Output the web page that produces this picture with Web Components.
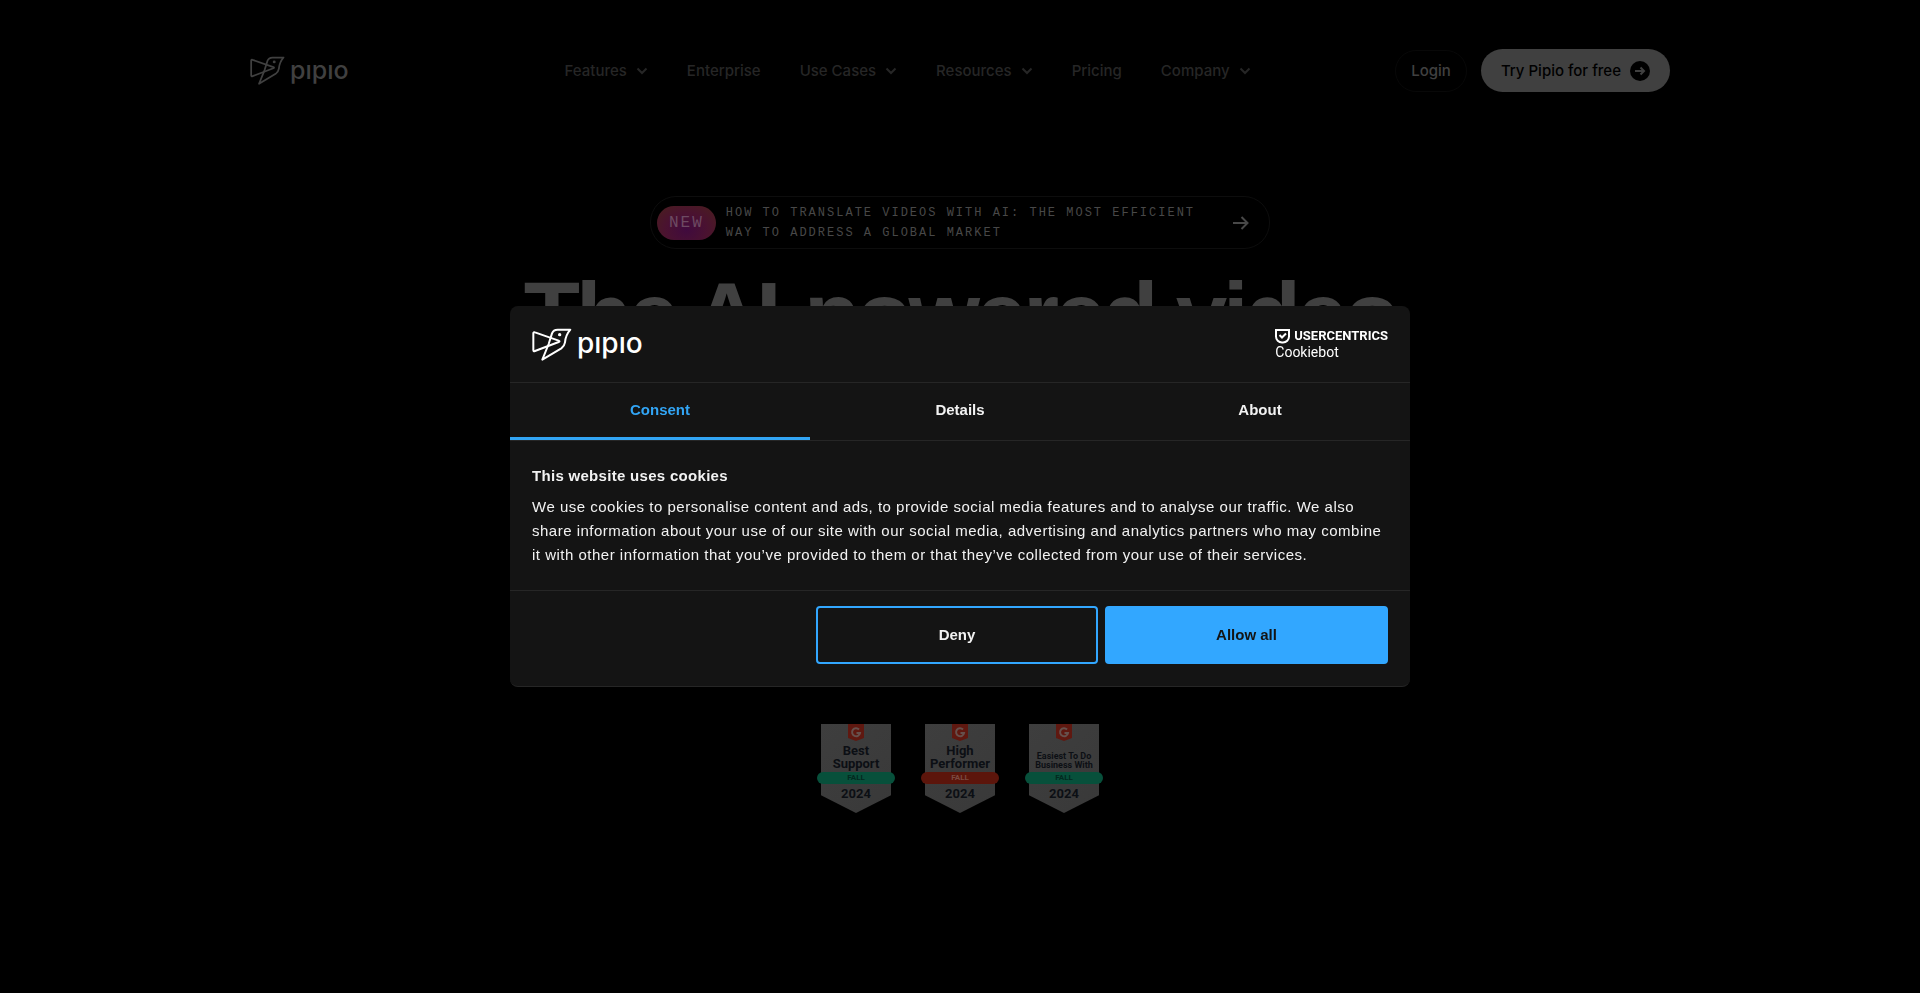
<!DOCTYPE html>
<html lang="en">
<head>
<meta charset="utf-8">
<meta name="viewport" content="width=device-width, initial-scale=1">
<title>Pipio</title>
<style>
  html { background: #000; }
  body { margin: 0; font-family: Inter, "Liberation Sans", sans-serif; color: #404040; }
</style>
</head>
<body>
<site-header>
  <pipio-logo slot="logo"></pipio-logo>
  <nav-item menu>Features</nav-item>
  <nav-item>Enterprise</nav-item>
  <nav-item menu>Use Cases</nav-item>
  <nav-item menu>Resources</nav-item>
  <nav-item>Pricing</nav-item>
  <nav-item menu>Company</nav-item>
</site-header>
<hero-section>
  <news-banner slot="banner">How to translate videos with AI: the most efficient way to address a global market</news-banner>
  <span slot="title">The AI-powered video</span>
  <award-badge>Best<br>Support</award-badge>
  <award-badge tone="red">High<br>Performer</award-badge>
  <award-badge small>Easiest To Do<br>Business With</award-badge>
</hero-section>
<cookie-dialog>
  <pipio-logo slot="logo" large></pipio-logo>
  <usercentrics-logo slot="vendor"></usercentrics-logo>
  <span slot="title">This website uses cookies</span>
  We use cookies to personalise content and ads, to provide social media features and to analyse our traffic. We also share information about your use of our site with our social media, advertising and analytics partners who may combine it with other information that you’ve provided to them or that they’ve collected from your use of their services.
</cookie-dialog>

<script>
const define = (name, html) => {
  const template = document.createElement('template');
  template.innerHTML = html;
  customElements.define(name, class extends HTMLElement {
    constructor() {
      super();
      this.attachShadow({ mode: 'open' }).append(template.content.cloneNode(true));
    }
  });
};

define('pipio-logo', `
<style>
  :host { display: inline-block; color: #404040; }
  a { display: flex; align-items: center; gap: 5px; color: inherit; text-decoration: none; }
  svg { width: 35px; height: 29px; }
  .word { font: 500 25px/28px Inter, sans-serif; padding-bottom: 2px; }
  :host([large]) { color: #fff; }
  :host([large]) svg { width: 40px; height: 33px; }
  :host([large]) .word { font-size: 28px; line-height: 32px; }
</style>
<a href="#" aria-label="Pipio">
  <svg viewBox="97 82 120 99" fill="none" stroke="currentColor" stroke-width="6" stroke-linejoin="round" aria-hidden="true">
    <path d="M101 98Q101 93 106 95L177 120Q182 122 177 124L106 151Q101 153 101 148Z"/>
    <path d="M212 87H174Q161 87 157 98L147 130L128 177L185 143Q194 137 196 125Q198 103 212 87Z"/>
    <circle cx="180" cy="102" r="5" fill="currentColor" stroke="none"/>
  </svg>
  <span class="word">pıpıo</span>
</a>`);

define('nav-item', `
<style>
  :host { display: block; }
  a { display: flex; align-items: center; gap: 9px; color: #262626; font: 500 15px/24px Inter, sans-serif; text-decoration: none; white-space: nowrap; }
  svg { display: none; width: 12px; height: 8px; }
  :host([menu]) svg { display: block; }
</style>
<a href="#"><slot></slot><svg viewBox="0 0 12 8" fill="none" stroke="currentColor" stroke-width="2" aria-hidden="true"><path d="M1.500 1.500L6 6L10.500 1.500"/></svg></a>`);

define('site-header', `
<style>
  :host { display: block; padding: 49px 24px 0; }
  header { display: grid; grid-template-columns: 3fr auto 4fr; align-items: center; max-width: 1420px; margin: 0 auto; }
  nav { display: flex; gap: 39px; }
  .actions { display: flex; justify-content: flex-end; align-items: center; gap: 14px; }
  .actions a { box-sizing: border-box; display: flex; align-items: center; border-radius: 24px; font: 500 15px/24px Inter, sans-serif; text-decoration: none; white-space: nowrap; }
  .login { height: 42px; padding: 0 15px; border: 1px solid #080808; color: #404040; }
  .try { height: 43px; padding: 0 20px; gap: 9px; background: #404040; color: #000; }
  .try svg { width: 20px; height: 20px; }
</style>
<header>
  <slot name="logo"></slot>
  <nav aria-label="Main"><slot></slot></nav>
  <div class="actions">
    <a class="login" href="#">Login</a>
    <a class="try" href="#">Try Pipio for free
      <svg viewBox="0 0 20 20" aria-hidden="true"><circle cx="10" cy="10" r="10" fill="#000"/><path d="M5 10h9M10.500 6.500L14 10l-3.500 3.500" fill="none" stroke="#404040" stroke-width="2"/></svg>
    </a>
  </div>
</header>`);

define('news-banner', `
<style>
  :host { display: block; width: 620px; max-width: 100%; margin: 0 auto; }
  a { box-sizing: border-box; display: flex; align-items: center; min-height: 52px; padding: 5px 20px 5px 6px; border: 1px solid #0d0d0d; border-radius: 26px; color: #484848; text-decoration: none; text-transform: uppercase; font: 12px/20px "Liberation Mono", monospace; letter-spacing: 2px; }
  .tag { flex: none; padding: 0 12px; margin-right: 10px; border-radius: 17px; background: radial-gradient(ellipse at 50% 70%, #400a3e, #4a1230 50%, #4a201c); color: #6d4a62; font-size: 16px; line-height: 34px; }
  .text { flex: 1; text-align: left; padding: 1px 24px 0 0; }
  svg { flex: none; width: 16px; height: 16px; }
</style>
<a href="#"><span class="tag">New</span><span class="text"><slot></slot></span>
<svg viewBox="0 0 16 16" fill="none" stroke="currentColor" stroke-width="2" aria-hidden="true"><path d="M0 8h14M8.500 2L14.500 8l-6 6"/></svg></a>`);

define('hero-section', `
<style>
  :host { display: block; padding: 104px 24px 180px; text-align: center; }
  h1 { margin: 18px 0 0; color: #404040; font: 700 92px/96px "Liberation Sans", Arial, sans-serif; letter-spacing: -4px; min-height: 457px; }
  .awards { display: flex; justify-content: center; gap: 26px; }
</style>
<main>
  <slot name="banner"></slot>
  <h1><slot name="title"></slot></h1>
  <div class="awards"><slot></slot></div>
</main>`);

define('award-badge', `
<style>
  :host { --ribbon: #07503b; --label: #03291f; position: relative; display: flex; flex-direction: column; width: 78px; height: 89px; color: #0c0f14; text-align: center; font: 700 13px/13px Roboto, sans-serif; }
  :host([tone=red]) { --ribbon: #5c150b; --label: #7a4a40; }
  .shield { position: absolute; inset: 0 4px; background: linear-gradient(135deg, #3e3e3e, #393939); clip-path: polygon(0 0, 100% 0, 100% 80%, 50% 100%, 0 80%); }
  svg { position: relative; width: 16px; height: 17px; margin: 0 auto; }
  .name { position: relative; display: flex; align-items: flex-end; justify-content: center; height: 29px; padding-bottom: 2px; }
  :host([small]) .name { font-size: 9px; line-height: 9px; white-space: nowrap; }
  .ribbon { position: relative; border-radius: 6px; background: var(--ribbon); color: var(--label); font-size: 8px; line-height: 12px; }
  .year { position: relative; padding-top: 3px; }
</style>
<div class="shield"></div>
<svg viewBox="0 0 16 17" aria-hidden="true"><path d="M0 0h16v14l-8 3l-8-3z" fill="#5f1810"/><path d="M11 5.500A4 4 0 1 0 12 9H8.500" fill="none" stroke="#66504c" stroke-width="2"/></svg>
<div class="name"><span><slot></slot></span></div>
<div class="ribbon">FALL</div>
<div class="year">2024</div>`);

define('usercentrics-logo', `
<style>
  :host { display: block; color: #fff; }
  a { display: grid; color: inherit; text-decoration: none; font: 400 14px/16px Roboto, sans-serif; }
  .top { display: flex; align-items: center; gap: 4px; font: 700 13px/16px "Liberation Sans Narrow", Roboto, sans-serif; }
  svg { width: 15px; height: 15px; }
</style>
<a href="#">
  <span class="top"><svg viewBox="0 0 15 15" fill="none" stroke="currentColor" stroke-width="2" aria-hidden="true"><path d="M1 1h13v6.500a6 6 0 0 1-6 6h-1a6 6 0 0 1-6-6z"/><path d="M4.500 6l2.500 2.500L11 4.500"/></svg>USERCENTRICS</span>
  <span>Cookiebot</span>
</a>`);

define('cookie-dialog', `
<style>
  :host { position: fixed; inset: 0; display: flex; align-items: center; justify-content: center; font: 400 15px/24px "Liberation Sans", Arial, sans-serif; color: #f2f2f2; }
  section { width: 900px; max-width: 94%; background: #141414; border-radius: 8px; border-bottom: 1px solid #262626; overflow: hidden; }
  header { box-sizing: border-box; display: flex; align-items: center; justify-content: space-between; height: 77px; padding: 0 22px; border-bottom: 1px solid #262626; }
  .tabs { display: grid; grid-template-columns: repeat(3, 1fr); border-bottom: 1px solid #262626; }
  button { font: 700 15px/24px "Liberation Sans", Arial, sans-serif; color: #f2f2f2; background: none; border: 0; cursor: pointer; }
  .tabs button { padding: 15px 0; border-bottom: 3px solid transparent; }
  .tabs button[aria-selected=true] { color: #32a5f5; border-color: #32a5f5; }
  .body { padding: 23px 22px; }
  h2 { margin: 0 0 7px; font-size: 15px; line-height: 24px; letter-spacing: 0.02em; }
  p { margin: 0; letter-spacing: 0.5px; }
  footer { display: flex; justify-content: flex-end; gap: 7px; padding: 15px 22px 22px; border-top: 1px solid #262626; }
  footer button { width: 282px; height: 58px; border: 2px solid #32a7ff; border-radius: 4px; }
  footer .allow { width: 283px; background: #32a7ff; color: #141414; }
</style>
<section role="dialog" aria-label="Cookie consent">
  <header><slot name="logo"></slot><slot name="vendor"></slot></header>
  <div class="tabs" role="tablist">
    <button role="tab" aria-selected="true">Consent</button>
    <button role="tab" aria-selected="false">Details</button>
    <button role="tab" aria-selected="false">About</button>
  </div>
  <div class="body"><h2><slot name="title"></slot></h2><p><slot></slot></p></div>
  <footer><button>Deny</button><button class="allow">Allow all</button></footer>
</section>`);
</script>
</body>
</html>
